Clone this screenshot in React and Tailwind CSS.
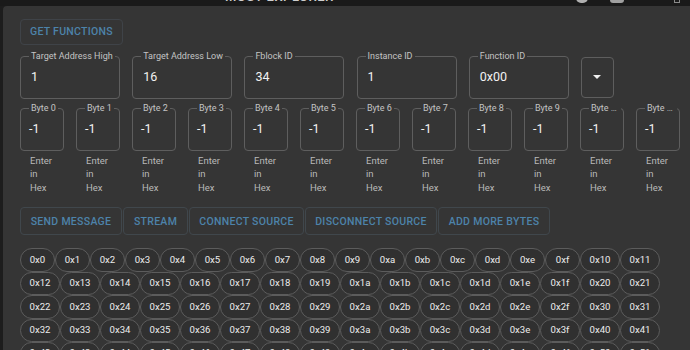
import React from 'react'

const mainFields = [
  { label: 'Target Address High', value: '1' },
  { label: 'Target Address Low', value: '16' },
  { label: 'Fblock ID', value: '34' },
  { label: 'Instance ID', value: '1' },
  { label: 'Function ID', value: '0x00' },
]

const bytes = Array.from({ length: 12 }, (_, i) => ({ label: `Byte ${i}`, value: '-1' }))

const actions = [
  { label: 'SEND MESSAGE', w: 'w-[102px]' },
  { label: 'STREAM', w: 'w-[65px]' },
  { label: 'CONNECT SOURCE', w: 'w-[115px]' },
  { label: 'DISCONNECT SOURCE', w: 'w-[132px]' },
  { label: 'ADD MORE BYTES', w: 'w-[112px]' },
]

const hexes = Array.from({ length: 120 }, (_, i) => '0x' + i.toString(16))

function Field({ label, value, narrow }) {
  return (
    <div
      className={`relative h-[43px] border border-[#5e5e5e] rounded-[4px] flex items-center ${
        narrow ? 'w-[44px] pl-[8px]' : 'w-[100px] pl-[10px]'
      }`}
    >
      <span
        className={`absolute -top-[6px] px-[2px] bg-[#353535] text-[9px] leading-[11px] text-[#c4c4c4] whitespace-nowrap truncate ${
          narrow ? 'left-[8px] max-w-[32px]' : 'left-[8px]'
        }`}
      >
        {label}
      </span>
      <span className="text-[12.5px] text-[#f2f2f2]">{value}</span>
    </div>
  )
}

export default function App() {
  return (
    <div className="w-[690px] h-[350px] overflow-hidden bg-[#1d1d1d] font-[Roboto,sans-serif]">
      {/* app bar behind the dialog */}
      <div className="h-[6px] overflow-hidden bg-[#1a1a1a] flex">
        <div className="ml-[225px] -mt-[13px] text-[13px] font-medium tracking-[0.5px] text-[#cfcfcf]">
          MOST EXPLORER
        </div>
        <div className="ml-[242px] -mt-[7px] w-[12px] h-[10px] rounded-full bg-[#b0b0b0]" />
        <div className="ml-[22px] -mt-[9px] w-[14px] h-[12px] rounded-[3px] bg-[#a0a0a0]" />
        <div className="ml-[50px] -mt-[6px] w-[6px] h-[9px] border border-[#8a8a8a]" />
      </div>

      {/* dialog */}
      <div className="ml-[3px] w-[700px] h-[344px] bg-[#353535] rounded-tl-[4px] pl-[17px] pt-[12px]">
        <button className="h-[26px] w-[103px] border border-[#3f4348] rounded-[4px] text-[10.5px] font-medium tracking-[0.3px] text-[#4d83aa]">
          GET FUNCTIONS
        </button>

        <div className="mt-[11px] flex items-center gap-[12.2px]">
          {mainFields.map(f => (
            <Field key={f.label} label={f.label} value={f.value} />
          ))}
          <div className="h-[41px] w-[33px] border border-[#5e5e5e] rounded-[4px] flex items-center justify-center">
            <div className="w-0 h-0 border-l-[4px] border-r-[4px] border-t-[4px] border-l-transparent border-r-transparent border-t-[#f0f0f0]" />
          </div>
        </div>

        <div className="mt-[9px] flex gap-[12px]">
          {bytes.map(b => (
            <div key={b.label} className="w-[44px]">
              <Field label={b.label} value={b.value} narrow />
              <p className="mt-[3px] px-[10px] text-[9.5px] leading-[13.5px] text-[#b9b9b9]">
                Enter in Hex
              </p>
            </div>
          ))}
        </div>

        <div className="mt-[13px] flex gap-[1px]">
          {actions.map(a => (
            <button
              key={a.label}
              className={`${a.w} h-[28px] border border-[#40474c] rounded-[4px] text-[10.5px] font-medium tracking-[0.3px] text-[#4d83aa]`}
            >
              {a.label}
            </button>
          ))}
        </div>

        <div className="mt-[13px] w-[660px] flex flex-wrap">
          {hexes.map(h => (
            <div
              key={h}
              className={`h-[23.4px] ${
                h.length === 3 ? 'w-[35px]' : 'w-[40px]'
              } border border-[#5c5c5c] rounded-full bg-[#303030] flex items-center justify-center text-[9.6px] text-[#ececec]`}
            >
              {h}
            </div>
          ))}
        </div>
      </div>
    </div>
  )
}
